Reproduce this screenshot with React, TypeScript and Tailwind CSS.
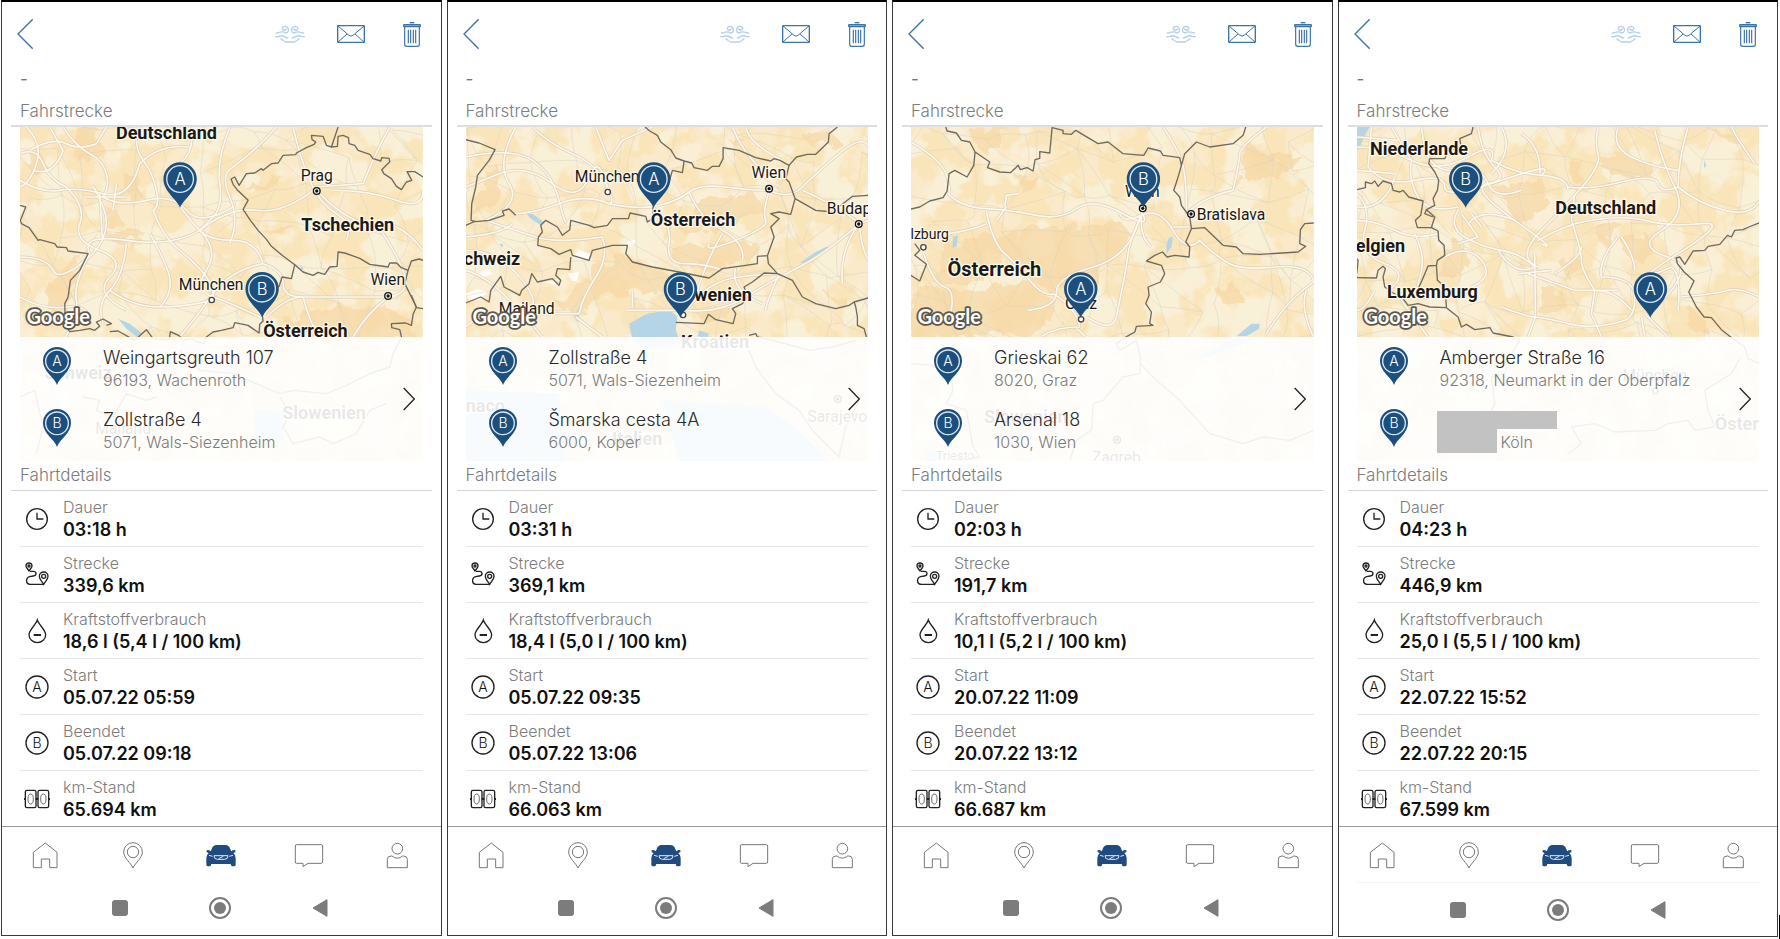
import React from 'react';

type Pt = { x: number; y: number };
type Label = Pt & { text: string; bold?: boolean; size?: number };
type MapData = {
  id: string;
  seed: number;
  x: number;
  borders: string[];
  roads: string[];
  water: string[];
  snow?: string[];
  patches: string[];
  labels: Label[];
  capitals: Pt[];
  cities: Pt[];
  a: Pt;
  b: Pt;
};
type Trip = {
  map: MapData;
  from: [string, string];
  to: [string, string] | null;
  toCity?: string;
  values: string[];
};

const map1: MapData = {
  id: 'm1',
  seed: 4,
  x: 60,
  borders: [
    'M1015 50 995 110 980 105 970 78 935 75 937 88 948 95 943 102 920 112 890 128 888 133 850 135 835 158 815 160 790 180 785 175 765 188 740 190 718 225 705 200 694 206 700 222 712 238 745 270 730 297 752 330 775 360 800 387 815 408 850 437 885 463 910 485 940 495 955 486 975 492 990 470 1012 468 1015 425 1035 428 1080 444 1110 462 1145 467 1165 470 1170 458 1190 458 1205 472 1225 480 1235 452 1258 446 1270 450',
    'M995 110 1013 108 1015 78 1030 75 1046 82 1048 100 1065 105 1075 120 1110 132 1120 145 1143 152 1146 142 1168 144 1170 154 1146 178 1152 190 1175 205 1190 228 1205 238 1220 215 1236 210 1222 184 1245 184 1270 200',
    'M885 463 875 505 847 500 838 528 812 540 800 575 788 618 790 632 780 642 778 668 745 645 705 637 700 652 665 660 640 665 620 680 612 700 570 685 550 690 538 676 512 664 508 690 460 685 440 658 425 672 405 690 355 662 330 664',
    'M60 285 78 290 62 330 65 340 88 352 115 390 120 388 165 400 172 410 200 412 205 422 265 430 240 480 212 510 205 560 195 580 197 645 210 664 240 660 270 655 285 660 300 648 290 635 310 626 335 640 320 645',
    'M1225 480 1215 520 1230 550 1250 590 1240 612 1235 645 1218 638 1175 640 1176 652 1200 658 1205 680 1180 730 1170 770 1110 790 1030 830 980 850 880 840 840 850 700 790 600 780 540 720',
    'M1235 555 1250 592 1270 595', 'M840 860 870 910 850 950 880 1000 960 980 1000 1000 1070 970 1110 900 1160 880', 'M60 860 105 840 130 950 110 1030', 'M250 860 300 870 290 900 340 920 380 850 440 870 470 860',
  ],
  roads: [
    'M60 130Q110 110 130 160T200 230Q260 290 240 340T300 420 330 500 380 600', 'M190 50Q230 110 270 130T320 190 310 260Q360 290 440 270T560 300 700 290', 'M320 50 290 100Q240 120 200 100T90 120', 'M60 210Q130 250 180 240T310 250 420 160Q480 100 570 110', 'M415 50Q400 110 430 150T470 240 460 300Q490 380 540 420T620 500 636 570', 'M570 50Q590 120 540 160T520 260Q570 330 600 360T700 390 790 460', 'M690 50Q650 150 660 220T640 320 600 360Q520 410 380 390T270 430', 'M690 400Q720 330 690 260T700 170Q780 110 830 50', 'M600 360Q660 420 620 480T640 560 790 625', 'M790 460Q690 480 640 550T540 680', 'M60 440Q140 440 160 480T280 430Q340 360 310 290T280 230', 'M270 430Q220 520 230 570T190 690', 'M380 400Q370 500 330 540T310 640', 'M330 540Q400 590 480 590T636 570', 'M480 590Q530 540 500 470T450 370', 'M880 50Q900 140 930 210T1010 310 1040 390', 'M950 230 1090 220Q1130 120 1170 50', 'M940 240Q850 310 770 300T600 360', 'M1000 240Q1110 240 1190 270T1270 240', 'M960 250Q1060 350 1130 340T1270 420', 'M1130 340Q1180 410 1210 480T1165 560', 'M800 620Q860 560 910 560T1100 560 1165 560', 'M910 560Q930 640 960 680', 'M1165 560Q1100 610 1060 680', 'M790 460Q850 480 850 520T910 560', 'M60 560Q130 600 200 590T270 640', 'M80 50Q130 100 110 160T60 230', 'M150 50 190 120Q160 200 100 180', 'M300 250 308 390 M350 220 340 300 M260 260 380 260',
  ],
  water: ['M355 625 390 640 428 670 412 680 380 655Z', 'M900 463 912 475 905 480Z', 'M760 900H850V990H770Z'],
  patches: ['M230 50 300 60 310 140 230 150Z', 'M370 210 410 190 430 260 390 280Z', 'M940 600 1150 580 1250 640 1250 690 950 690 850 640Z', 'M70 150 120 120 150 180 100 190Z', 'M130 540 200 480 240 420 220 560 150 600Z', 'M560 60 640 50 620 90Z', 'M310 280 350 300 380 350 320 350Z', 'M300 370 430 360 390 420Z', 'M730 230 850 190 820 230 750 240Z', 'M800 370 880 340 860 380Z'],
  labels: [{ x: 500, y: 86, text: 'Deutschland', bold: true }, { x: 951, y: 212, text: 'Prag' }, { x: 1044, y: 362, text: 'Tschechien', bold: true }, { x: 634, y: 540, text: 'München' }, { x: 1164, y: 525, text: 'Wien' }, { x: 917, y: 680, text: 'Österreich', bold: true }, { x: 235, y: 806, text: 'Schweiz', bold: true }, { x: 973, y: 926, text: 'Slowenien', bold: true }, { x: 370, y: 970, text: 'Mailand' }],
  capitals: [{ x: 951, y: 242 }, { x: 1165, y: 557 }],
  cities: [{ x: 636, y: 569 }],
  a: { x: 541, y: 206 },
  b: { x: 787, y: 535 },
};

const map2: MapData = {
  id: 'm2',
  seed: 9,
  x: 60,
  borders: [
    'M598 50 612 62 635 75 645 95 675 118 690 143 715 152 738 158 745 172 785 180 800 168 820 168 832 145 832 112 880 120 930 142 975 152 985 145 1003 150 1020 160 1030 165 1052 140 1085 132 1110 132 1148 95 1150 70 1175 50',
    'M60 88 100 98 148 118 130 150 95 195 90 230 78 280 76 330 90 334 130 330 175 315 170 302 190 296 210 315 M60 345 90 332',
    'M715 152 710 187 680 180 670 215 635 240 622 290 620 325 605 335 600 318 553 308 548 325 500 325 485 345 445 352 430 345 375 330 372 358 350 375 335 350 300 330 285 345 290 365 278 380 276 405 315 415 340 432 375 418 380 435 430 450 440 420 500 405 545 405 540 430 560 455 620 470 700 485 790 503 830 475 900 465 935 460 935 438 965 436 985 380 975 350 1000 325 975 310 1000 305 1035 312 1048 265 1030 215 1020 205 1030 165',
    'M60 578 105 560 130 575 135 540 165 498 175 530 222 555 228 540 250 520 258 490 275 515 320 505 340 525 345 510 330 495 335 475 372 478 375 440',
    'M1048 265 1110 300 1160 305 1220 258 1270 255', 'M965 436 968 460 995 490 1040 510 1070 560 1110 580 1170 595 1210 585 1225 575 1270 562', 'M995 490 955 488 920 515 895 530 905 560 890 580 860 595 870 610 862 640 810 628 788 612 775 640 690 636',
    'M1225 575 1230 590 1235 620 1235 645 1255 655 1262 680', 'M910 675 930 670 935 680 1000 695 1090 720 1160 710 1230 690', 'M910 720 930 770 990 850 1060 900 1100 960 1180 1040 1200 950 1250 850',
  ],
  roads: [
    'M60 140Q200 110 260 150T340 270 360 330', 'M210 50Q150 160 190 220T120 330', 'M260 50Q310 100 380 130T480 220 490 280', 'M450 50 490 150 530 90 620 50', 'M490 280Q580 300 640 285T730 245 840 230 960 240', 'M490 280Q420 250 340 280T200 310', 'M620 290Q680 340 670 400T720 460 830 480', 'M730 245Q760 320 830 360T890 450', 'M970 240Q950 310 960 330T870 390 790 400', 'M970 240Q1030 270 1070 230T1180 130 1270 110', 'M1070 240Q1160 280 1230 330', 'M1240 340Q1140 430 1060 470T900 560 720 600', 'M1240 340 1270 330 M1240 340Q1250 430 1270 450 M1240 340Q1180 420 1190 520', 'M470 380Q490 440 450 500T400 610Q300 610 200 610T60 650', 'M540 600 720 600 M390 620 470 680 M240 620 290 680', 'M200 340Q170 370 60 380 M60 420Q160 420 230 510T220 600', 'M120 330Q210 360 270 380T470 380', 'M730 590Q790 510 880 500T990 490', 'M860 50Q890 130 970 200 M900 50Q910 100 1010 150', 'M830 370Q780 450 750 560', 'M870 470Q850 540 950 580', 'M560 540 560 590 M1000 490Q960 580 960 600', 'M60 230 160 190Q240 160 320 220T430 200 490 250', 'M60 480Q130 500 200 580',
  ],
  water: ['M240 308 262 312 295 335 285 345 255 325Z', 'M1062 458 1110 425 1145 408 1148 418 1095 455Z', 'M550 640 600 612 670 598 695 618 690 660 705 700 600 720 560 690Z', 'M760 660 790 670 780 690 755 685Z', 'M385 620 402 585 408 590 395 635Z', 'M60 840 340 850 360 1052 60 1052Z', 'M650 870 960 890 1060 960 1150 1052 700 1052Z', 'M160 400 172 402 170 412Z'],
  snow: ['M385 435 400 420 435 430 428 445 398 447Z', 'M365 490 400 485 395 510 380 513Z', 'M60 550 95 535 125 545 100 570 70 570Z', 'M95 490 130 475 140 490 110 500Z', 'M540 395 568 388 565 403 550 407Z', 'M295 515 330 510 330 525Z'],
  patches: ['M680 330 770 270 930 250 965 310 860 340 720 380Z', 'M110 170 150 160 180 260 120 290 80 320Z', 'M450 470 540 440 680 490 660 550 500 550 400 600 340 600Z', 'M700 410 930 390 930 440 800 480 690 460Z', 'M1060 70 1150 60 1190 100 1100 110Z', 'M740 600 850 590 850 630 770 630Z', 'M840 80 900 90 870 110Z', 'M1140 550 1200 560 1180 590Z'],
  labels: [{ x: 484, y: 216, text: 'München' }, { x: 969, y: 203, text: 'Wien' }, { x: 742, y: 346, text: 'Österreich', bold: true }, { x: 1143, y: 310, text: 'Budapest' }, { x: 122, y: 465, text: 'Schweiz', bold: true }, { x: 243, y: 610, text: 'Mailand' }, { x: 793, y: 573, text: 'Slowenien', bold: true }, { x: 808, y: 712, text: 'Kroatien', bold: true }, { x: 80, y: 904, text: 'Monaco', bold: true }, { x: 574, y: 1004, text: 'Italien', bold: true }, { x: 1175, y: 936, text: 'Sarajevo' }],
  capitals: [{ x: 970, y: 235 }, { x: 1239, y: 341 }, { x: 1176, y: 866 }],
  cities: [{ x: 486, y: 245 }, { x: 712, y: 614 }],
  a: { x: 624, y: 206 },
  b: { x: 704, y: 536 },
};

const map3: MapData = {
  id: 'm3',
  seed: 15,
  x: 63,
  borders: [
    'M168 50 172 62 200 68 215 90 240 95 256 125 300 155 293 172 330 185 362 187 378 172 385 165 392 178 412 172 430 182 436 148 450 144 450 124 480 128 487 52 520 60 520 70 545 72 558 60 625 100 655 95 700 130 762 135 775 113 812 122 820 135 870 142 875 165 885 130 920 95 960 110 1030 100 1060 75 1068 50',
    'M256 125 252 165 232 200 195 180 178 190 172 242 160 262 120 272 90 290 63 296', 'M875 165 862 210 852 240 870 260 875 285 900 320 905 355 888 395 900 410 898 440 855 435 832 440 818 425 795 435 770 452 815 465 825 490 812 515 775 530 778 555 768 580 785 605 780 640 790 645 740 648 735 665 712 678', 'M905 355 945 352 1000 405 1040 410 1060 430 1110 432 1225 425 1248 408 1230 400 1232 358 1245 340 1272 338', 'M75 400 90 420 75 435 110 462 90 512 63 495', 'M712 678 680 700 690 720 740 690 752 740 750 790 700 800 640 870 610 880 605 960 560 990 540 1050', 'M63 760 180 770 190 840 170 880 230 900 250 1010 270 1040 200 1052', 'M752 760 800 810 870 870 960 970 1060 1000 1120 980 1200 990 1272 960',
  ],
  roads: [
    'M63 95Q160 150 172 200T175 250Q210 290 290 295T440 315 560 295 700 310 755 305', 'M290 305Q310 400 345 430T420 510 490 550', 'M290 340Q230 370 63 380', 'M345 290 350 255 385 250 M320 330 350 290', 'M690 310Q700 340 755 315T850 360 930 390Q980 440 1020 460T1160 470 1272 515', 'M755 315Q720 390 715 430T700 520 680 620 590 620', 'M750 320Q720 440 610 470T500 545 415 600', 'M755 320Q750 380 785 410', 'M490 550Q560 590 570 650Q500 650 455 678', 'M820 50Q860 110 875 150T890 300', 'M890 310Q940 260 1030 240Q1050 150 1050 130T1130 50', 'M1272 515Q1190 570 1130 670', 'M1250 540Q1230 590 1270 678', 'M100 425Q130 520 165 530T180 620', 'M560 655 590 680 M850 350 900 350',
  ],
  water: ['M830 400 838 382 850 380 845 410 830 430Z', 'M1040 678 1085 640 1110 640 1108 655 1070 678Z', 'M190 380 205 375 200 410 188 412Z', 'M920 740 1040 680 1090 690 960 740Z', 'M110 1020H180V1052H110Z'],
  patches: ['M260 370 540 345 690 330 730 380 680 450 620 490 590 560 440 530 340 430 270 500 130 520 170 420Z', 'M63 540 220 530 420 520 500 570 440 680 63 678Z', 'M230 50 360 55 300 140 260 110Z', 'M1070 90 1150 150 1230 130 1220 180 1080 220 1060 160Z', 'M380 200 440 190 450 240 400 250Z', 'M1050 190 1070 210 1040 240Z', 'M980 540 1040 520 1060 570 1010 590Z', 'M720 180 760 160 740 220Z'],
  labels: [{ x: 96, y: 387, text: 'Salzburg', size: 42 }, { x: 314, y: 498, text: 'Österreich', bold: true, size: 60 }, { x: 758, y: 260, text: 'Wien' }, { x: 1024, y: 330, text: 'Bratislava' }, { x: 574, y: 596, text: 'Graz' }, { x: 408, y: 938, text: 'Slowenien', bold: true }, { x: 186, y: 1050, text: 'Triest', size: 38 }, { x: 680, y: 1058, text: 'Zagreb' }],
  capitals: [{ x: 759, y: 294 }, { x: 904, y: 311 }, { x: 682, y: 988 }],
  cities: [{ x: 101, y: 411 }, { x: 574, y: 627 }, { x: 242, y: 1038 }],
  a: { x: 573, y: 536 },
  b: { x: 761, y: 206 },
};

const map4: MapData = {
  id: 'm4',
  seed: 22,
  x: 66,
  borders: [
    'M415 50 410 70 375 85 378 105 340 125 330 145 285 145 282 160 300 185 312 210 308 240 295 265 300 285 275 298 300 320 290 352 310 362 312 390 328 405 330 435 308 450 305 465 280 467 262 510 250 535', 'M66 238 92 232 92 215 110 220 120 212 130 228 145 212 170 220 175 240 195 245 205 240 222 260 265 272 258 315 242 330 248 352 290 352', 'M275 298 270 310 295 320', 'M66 445 70 450 66 490 M66 502 125 503 130 480 145 468 152 475 145 500 150 530 175 548 205 565 220 585 250 580 285 590 335 592 370 620 380 650 395 642 420 658 465 652 475 668 535 680', 'M305 465 308 510 330 530 333 560 335 592', 'M1275 337 1242 350 1225 358 1200 360 1190 380 1178 375 1155 402 1120 408 1110 420 1075 422 1050 462 1035 440 1024 443 1028 460 1048 485 1078 512 1062 545 1085 590 1108 620 1130 622 1160 658 1185 678 1230 710 1240 745 1275 760', 'M535 680 555 690 525 740 510 790 470 800 480 880 440 960', 'M1215 745 1190 790 1110 840 1120 900 1140 950 1080 960 1060 930 1000 940 960 960 840 965 780 940 710 950 740 1000 700 1030',
  ],
  roads: [
    'M66 110Q150 110 230 150T400 140 470 150Q540 190 620 195T700 240', 'M110 50 100 170Q150 230 240 210T330 230 500 210 620 195', 'M170 50 230 150Q220 210 250 260T370 290', 'M260 50 270 120Q300 190 370 180T460 220 560 240', 'M430 50Q440 130 480 170T460 220 540 330 620 400', 'M500 50Q540 120 470 190', 'M560 70Q620 110 615 190', 'M790 50Q780 100 790 130T750 220 620 360 610 470', 'M700 230Q760 240 860 215T970 220 1030 230', 'M960 60Q980 150 1020 230T980 360 1000 440 940 610', 'M1060 50Q1030 150 1030 230Q1090 280 1170 300T1275 270', 'M850 50Q830 110 890 140T1030 180', 'M1190 50Q1210 90 1260 160', 'M720 340Q850 310 930 330T1100 340 1030 430 1010 470', 'M720 250 710 330Q740 420 740 450T780 540Q840 540 890 600', 'M610 390Q660 360 720 340', 'M66 330Q120 330 180 360T310 370', 'M66 250Q110 290 90 360T150 460 160 540', 'M240 370Q270 430 260 480T240 550', 'M370 300Q340 350 390 380T500 420 600 470', 'M400 340Q440 290 540 330', 'M380 310 430 380 370 400 M410 310 440 350', 'M600 470Q540 500 490 420', 'M330 440Q400 400 440 450T410 530', 'M600 430 602 620 580 680', 'M580 490 720 540 850 540 M550 490 650 480', 'M660 490Q740 440 740 410', 'M800 500Q900 500 900 560T870 630Q780 660 700 640T600 620 500 590', 'M1010 470Q1040 490 1030 600', 'M1040 560Q1150 550 1180 540T1275 560', 'M780 540 770 610 800 680 M930 610 1000 680 M920 620 930 680', 'M850 380Q790 450 800 500', 'M860 380Q900 440 900 480 920 490', 'M120 540Q90 600 66 600 M200 570 280 680', 'M66 180 180 190 M66 80 190 90 M180 200Q150 300 66 290',
  ],
  water: ['M66 50H105L90 75 75 110 66 120Z', 'M1108 150 1114 165 1108 175Z'],
  patches: ['M490 240 560 230 620 200 635 240 600 320 550 340Z', 'M790 140 860 130 960 160 965 200 880 205 800 170Z', 'M860 390 940 370 960 420 920 455 870 430Z', 'M620 550 680 530 690 590 640 620 610 610Z', 'M320 420 370 390 410 460 360 510 310 490Z', 'M700 150 740 150 740 220 710 210Z', 'M780 340 850 330 850 370 800 400Z', 'M1070 590 1120 640 1130 678 1050 640Z', 'M680 460 740 440 750 490 700 510Z', 'M1120 60 1200 80 1230 110 1200 100Z'],
  labels: [{ x: 253, y: 133, text: 'Niederlande', bold: true }, { x: 813, y: 310, text: 'Deutschland', bold: true }, { x: 120, y: 424, text: 'Belgien', bold: true }, { x: 293, y: 562, text: 'Luxemburg', bold: true }, { x: 960, y: 812, text: 'München' }, { x: 1267, y: 960, text: 'Österreich', bold: true }],
  capitals: [],
  cities: [{ x: 962, y: 842 }],
  a: { x: 947, y: 536 },
  b: { x: 393, y: 206 },
};

const trips: Trip[] = [
  { map: map1, from: ['Weingartsgreuth 107', '96193, Wachenroth'], to: ['Zollstraße 4', '5071, Wals-Siezenheim'], values: ['03:18 h', '339,6 km', '18,6 l (5,4 l / 100 km)', '05.07.22 05:59', '05.07.22 09:18', '65.694 km'] },
  { map: map2, from: ['Zollstraße 4', '5071, Wals-Siezenheim'], to: ['Šmarska cesta 4A', '6000, Koper'], values: ['03:31 h', '369,1 km', '18,4 l (5,0 l / 100 km)', '05.07.22 09:35', '05.07.22 13:06', '66.063 km'] },
  { map: map3, from: ['Grieskai 62', '8020, Graz'], to: ['Arsenal 18', '1030, Wien'], values: ['02:03 h', '191,7 km', '10,1 l (5,2 l / 100 km)', '20.07.22 11:09', '20.07.22 13:12', '66.687 km'] },
  { map: map4, from: ['Amberger Straße 16', '92318, Neumarkt in der Oberpfalz'], to: null, toCity: 'Köln', values: ['04:23 h', '446,9 km', '25,0 l (5,5 l / 100 km)', '22.07.22 15:52', '22.07.22 20:15', '67.599 km'] },
];

// Irregular web of minor roads: jittered grid nodes joined to their neighbours.
function minorRoads(seed: number, x0: number) {
  let s = seed * 7919 + 13;
  const rnd = () => {
    s = (s * 16807) % 2147483647;
    return s / 2147483647;
  };
  const step = 105;
  const cols = 13;
  const rows = 11;
  const pts: Pt[] = [];
  for (let r = 0; r < rows; r++)
    for (let c = 0; c < cols; c++)
      pts.push({ x: Math.round(x0 + c * step + (rnd() - 0.5) * 90), y: Math.round(50 + r * step + (rnd() - 0.5) * 90) });
  let d = '';
  const join = (a: Pt, b: Pt) => {
    const mx = Math.round((a.x + b.x) / 2 + (rnd() - 0.5) * 40);
    const my = Math.round((a.y + b.y) / 2 + (rnd() - 0.5) * 40);
    d += `M${a.x} ${a.y}Q${mx} ${my} ${b.x} ${b.y}`;
  };
  for (let r = 0; r < rows; r++)
    for (let c = 0; c < cols; c++) {
      const i = r * cols + c;
      if (c < cols - 1 && rnd() < 0.8) join(pts[i], pts[i + 1]);
      if (r < rows - 1 && rnd() < 0.8) join(pts[i], pts[i + cols]);
      if (c < cols - 1 && r < rows - 1 && rnd() < 0.35) join(pts[i], pts[i + cols + 1]);
    }
  return d;
}

function MapPin({ x, y, letter }: Pt & { letter: string }) {
  return (
    <g transform={`translate(${x} ${y})`}>
      <path d="M0 86C-10 60-50 38-50 0A50 50 0 0 1 50 0C50 38 10 60 0 86Z" fill="#1d4f7c" />
      <circle r="40" fill="none" stroke="#d9e8f5" strokeWidth="4" />
      <text y="18" textAnchor="middle" fontFamily="Inter, sans-serif" fontWeight="300" fontSize="50" fill="#fff">{letter}</text>
    </g>
  );
}

function RouteMap({ m }: { m: MapData }) {
  const land = m.id + '-land';
  const fine = m.id + '-fine';
  const rough = m.id + '-rough';
  return (
    <svg className="absolute inset-0 h-full w-full" viewBox={`${m.x} 50 1209 1002`} preserveAspectRatio="xMidYMid slice" role="img" aria-label="Karte">
      <defs>
        <filter id={land} x="0" y="0" width="1" height="1">
          <feTurbulence type="fractalNoise" baseFrequency="0.011" numOctaves="4" seed={m.seed} />
          <feColorMatrix values="0 0 0 0 0.97  0 0 0 0 0.85  0 0 0 0 0.66  9 0 0 0 -4.8" />
        </filter>
        <filter id={fine} x="0" y="0" width="1" height="1">
          <feTurbulence type="fractalNoise" baseFrequency="0.009" numOctaves="4" seed={m.seed + 50} />
          <feColorMatrix values="0 0 0 0 0.955  0 0 0 0 0.91  0 0 0 0 0.79  0 9 0 0 -4.3" />
        </filter>
        <filter id={rough}>
          <feTurbulence type="fractalNoise" baseFrequency="0.02" numOctaves="3" seed={m.seed} />
          <feDisplacementMap in="SourceGraphic" scale="60" />
        </filter>
      </defs>
      <rect x={m.x} y="50" width="1209" height="1002" fill="#f9e5b9" />
      <rect x={m.x} y="50" width="1209" height="1002" filter={`url(#${fine})`} opacity="0.7" />
      <rect x={m.x} y="50" width="1209" height="1002" filter={`url(#${land})`} opacity="0.65" />
      <g fill="#f7d8a6" opacity="0.7" filter={`url(#${rough})`}>
        {m.patches.map((d) => <path key={d} d={d} />)}
      </g>
      <g fill="#b4d5e8">{m.water.map((d) => <path key={d} d={d} />)}</g>
      {m.snow && <g fill="#fffefb">{m.snow.map((d) => <path key={d} d={d} />)}</g>}
      <path d={minorRoads(m.seed, m.x)} fill="none" stroke="#dcd3bd" strokeWidth="3" opacity="0.5" />
      <g fill="none" strokeLinejoin="round">
        <g stroke="#dccfb8" strokeWidth="9">{m.roads.map((d) => <path key={d} d={d} />)}</g>
        <g stroke="#fdf7ec" strokeWidth="5">{m.roads.map((d) => <path key={d} d={d} />)}</g>
        <g stroke="#6f6a5e" strokeWidth="4">{m.borders.map((d) => <path key={d} d={d} />)}</g>
      </g>
      {m.cities.map((p) => <circle key={p.x} cx={p.x} cy={p.y} r="8" fill="#fff" stroke="#444" strokeWidth="4" />)}
      {m.capitals.map((p) => (
        <g key={p.x}>
          <circle cx={p.x} cy={p.y} r="10" fill="#fff" stroke="#111" strokeWidth="4" />
          <circle cx={p.x} cy={p.y} r="5" fill="#111" />
        </g>
      ))}
      <g fontFamily="Roboto, sans-serif" fill="#1a1a1a" stroke="#fff8e8" strokeWidth="8" strokeLinejoin="round" style={{ paintOrder: 'stroke' }}>
        {m.labels.map((l) => (
          <text key={l.text} x={l.x} y={l.y} fontSize={l.size ?? (l.bold ? 54 : 47)} fontWeight={l.bold ? 700 : 400} textAnchor={l.text === 'Budapest' ? 'start' : 'middle'}>{l.text}</text>
        ))}
      </g>
      <text x={m.x + 20} y="642" fontFamily="Lato, sans-serif" fontWeight="700" fontSize="60" fill="#fff" stroke="#5c574d" strokeWidth="11" strokeLinejoin="round" style={{ paintOrder: 'stroke' }}>Google</text>
      <MapPin {...m.a} letter="A" />
      <MapPin {...m.b} letter="B" />
    </svg>
  );
}

function StopPin({ letter }: { letter: string }) {
  return (
    <svg className="h-[38px] w-7 shrink-0" viewBox="0 0 84 114" aria-hidden="true">
      <path d="M42 114C34 90 0 74 0 42A42 42 0 0 1 84 42C84 74 50 90 42 114Z" fill="#1d4f7c" />
      <circle cx="42" cy="43" r="34" fill="none" stroke="#d9e8f5" strokeWidth="4" />
      <text x="42" y="58" textAnchor="middle" fontFamily="Inter, sans-serif" fontWeight="300" fontSize="42" fill="#fff">{letter}</text>
    </svg>
  );
}

function Stop({ letter, children }: { letter: string; children: React.ReactNode }) {
  return (
    <span className="flex h-[62px] items-start pl-[23px] pt-[10px]">
      <StopPin letter={letter} />
      <span className="block pl-8">{children}</span>
    </span>
  );
}

const Address = ({ lines }: { lines: [string, string] }) => (
  <>
    <span className="block text-[18px] leading-[22px] text-[#2a2a2a]">{lines[0]}</span>
    <span className="block text-[16px] leading-[22px] text-[#7c7c7c]">{lines[1]}</span>
  </>
);

const Letter = ({ l }: { l: string }) => (
  <>
    <circle cx="39" cy="39" r="33" />
    <text x="39" y="54" textAnchor="middle" fontFamily="Inter, sans-serif" fontWeight="300" fontSize="42" fill="#111" stroke="none">{l}</text>
  </>
);

const detailIcons: React.ReactNode[] = [
  <><circle cx="39" cy="39" r="31" /><path d="M39 20V39H58" /></>,
  <>
    <path d="M15 27C11 20 6 17 6 12A9 9 0 0 1 24 12C24 17 19 20 15 27Z" /><circle cx="15" cy="12" r="3" />
    <path d="M59 67C53 56 46 52 46 43A13 13 0 0 1 72 43C72 52 65 56 59 67Z" /><circle cx="59" cy="43" r="6" />
    <path d="M18 28H28C38 28 39 40 28 42L17 44C4 48 5 66 18 67H59" />
  </>,
  <><path d="M40 6C36 20 15 36 15 50A25 24 0 0 0 65 50C65 36 44 20 40 6Z" /><path d="M29 51H51" strokeWidth="6" /></>,
  <Letter l="A" />,
  <Letter l="B" />,
  <>
    <rect x="4" y="13" width="32" height="52" rx="5" /><rect x="42" y="13" width="32" height="52" rx="5" />
    <path d="M0 39H5M35 39H43M73 39H78" strokeWidth="6" />
    <ellipse cx="20" cy="39" rx="8" ry="15" strokeWidth="2" /><ellipse cx="58" cy="39" rx="8" ry="15" strokeWidth="2" />
  </>,
];
const detailLabels = ['Dauer', 'Strecke', 'Kraftstoffverbrauch', 'Start', 'Beendet', 'km-Stand'];

const navItems: { label: string; icon: React.ReactNode }[] = [
  { label: 'Start', icon: <path d="M10 37 46 9 81 37V83H59V57H34V83H10Z" /> },
  { label: 'Karte', icon: <><path d="M45 84C38 68 17 54 17 36A28 28 0 0 1 73 36C73 54 52 68 45 84Z" /><circle cx="45" cy="36" r="17" /></> },
  {
    label: 'Fahrzeug',
    icon: (
      <g stroke="none">
        <path fill="#204b80" d="M16 30Q20 15 32 15H58Q70 15 74 30L76 34 80 31Q88 29 89 33 89 38 82 39 89 45 89 54V74Q89 79 84 79H79Q75 79 74 72H16Q15 79 11 79H6Q1 79 1 74V54Q1 45 8 39 1 38 1 33 2 29 10 31L14 34Z" />
        <path fill="none" stroke="#dfe8f2" strokeWidth="3" d="M9 46 20 49M81 46 70 49M24 47H66Q66 58 56 58H34Q24 58 24 47ZM38 56 52 49" />
      </g>
    ),
  },
  { label: 'Nachrichten', icon: <path d="M8 14H82Q86 14 86 18V66Q86 70 82 70H42L27 80V70H8Q4 70 4 66V18Q4 14 8 14Z" /> },
  { label: 'Profil', icon: <><circle cx="46" cy="26" r="16" /><path d="M16 83V58Q16 48 27 48H30Q46 61 62 48H65Q76 48 76 58V83Z" /></> },
];

function Phone({ trip, last }: { trip: Trip; last: boolean }) {
  return (
    <section className="flex min-w-0 flex-col border border-t-2 border-[#3a3a3a] border-t-black bg-white">
      <header className="flex h-16 items-center pl-[15px] pr-5">
        <button type="button" aria-label="Zurück" className="mr-auto">
          <svg className="h-8 w-4" viewBox="0 0 48 96" fill="none" stroke="#3b73ab" strokeWidth="4"><path d="M47 4 3 48 47 92" /></svg>
        </button>
        <button type="button" aria-label="Teilen">
          <svg className="h-[18px] w-[30px]" viewBox="0 0 90 54" fill="none" stroke="#b5d0ea" strokeWidth="4" strokeLinecap="round">
            <path d="M4 24C14 24 20 16 32 24M32 24C42 22 42 14 38 8C32 1 20 5 22 12C24 17 30 17 34 12" />
            <path d="M86 24C76 24 70 16 58 24M58 24C48 22 48 14 52 8C58 1 70 5 68 12C66 17 60 17 56 12" />
            <path d="M2 35H12C20 27 26 36 38 39M88 35H78C70 27 64 36 52 39M18 42C24 44 26 51 34 51H56C64 51 66 44 72 42" />
          </svg>
        </button>
        <button type="button" aria-label="Nachricht" className="ml-8">
          <svg className="h-[18px] w-7" viewBox="0 0 84 54" fill="none" stroke="#3b73ab" strokeWidth="4">
            <rect x="2" y="2" width="80" height="50" rx="2" /><path d="M3 3 36 31Q42 36 48 31L81 3M3 51 30 27M81 51 54 27" strokeWidth="3" />
          </svg>
        </button>
        <button type="button" aria-label="Löschen" className="ml-[38px]">
          <svg className="h-[25px] w-[18px]" viewBox="0 0 54 75" fill="none" stroke="#3b73ab" strokeWidth="4">
            <path d="M20 2H34" /><rect x="2" y="8" width="50" height="6" rx="2" fill="#8db4dc" />
            <path d="M5 15V67Q5 73 11 73H43Q49 73 49 67V15M16 23V64M23 23V64M31 23V64M38 23V64" strokeWidth="3.5" />
          </svg>
        </button>
      </header>
      <p className="h-6 pl-[18px] text-[17px] font-normal leading-[26px] text-[#777]">-</p>
      <h2 className="mx-[9px] h-[37px] border-b-2 border-[#dedede] pl-[9px] pt-1 text-[17px] leading-[34px] text-[#7c7c7c]">Fahrstrecke</h2>
      <div className="relative mx-[18px] h-[334px] overflow-hidden">
        <RouteMap m={trip.map} />
        <button type="button" className="absolute inset-x-0 bottom-0 flex h-[124px] items-center bg-white/90 text-left">
          <span className="min-w-0 flex-1">
            <Stop letter="A"><Address lines={trip.from} /></Stop>
            <Stop letter="B">
              {trip.to ? (
                <Address lines={trip.to} />
              ) : (
                <span className="-ml-[3px] block pt-[2px]">
                  <span className="block h-[18px] w-[120px] bg-[#c2c2c2]" />
                  <span className="flex">
                    <span className="h-6 w-[60px] bg-[#c2c2c2]" />
                    <span className="pl-1 text-[16px] leading-[26px] text-[#7c7c7c]">{trip.toCity}</span>
                  </span>
                </span>
              )}
            </Stop>
          </span>
          <svg className="mr-2 h-6 w-3 shrink-0" viewBox="0 0 36 72" fill="none" stroke="#222" strokeWidth="4"><path d="M2 3 34 36 2 69" /></svg>
        </button>
      </div>
      <h2 className="mx-[9px] h-[30px] border-b border-[#d4d4d4] pl-[9px] text-[17px] leading-[29px] text-[#7c7c7c]">Fahrtdetails</h2>
      <dl className="px-[18px]">
        {detailLabels.map((label, i) => (
          <div key={label} className={i < 5 ? 'flex h-14 border-b border-[#e6e6e6]' : 'flex h-[55px]'}>
            <svg className="ml-1 mt-[15px] h-[26px] w-[26px] shrink-0" viewBox="0 0 78 78" fill="none" stroke="#222" strokeWidth="4" aria-hidden="true">{detailIcons[i]}</svg>
            <div className="pl-[13px] pt-[6px]">
              <dt className="text-[16px] leading-[21px] text-[#7c7c7c]">{label}</dt>
              <dd className="text-[18px] font-semibold leading-6 text-[#111]">{trip.values[i]}</dd>
            </div>
          </div>
        ))}
      </dl>
      <nav className="flex h-14 items-center justify-between border-t border-[#999] pl-7 pr-[29px]">
        {navItems.map((n) => (
          <a key={n.label} href="#" aria-label={n.label}>
            <svg className="h-[30px] w-[30px]" viewBox="0 0 90 90" fill="none" stroke="#777" strokeWidth="3" strokeLinejoin="round">{n.icon}</svg>
          </a>
        ))}
      </nav>
      <div className={last ? 'mx-[18px] flex h-[54px] items-center justify-center gap-[81px] border-t border-[#f4f4f4]' : 'mx-[18px] flex h-[53px] items-center justify-center gap-[81px] pb-0.5 pr-0.5'}>
        <button type="button" aria-label="Übersicht" className="h-4 w-4 rounded-[3px] bg-[#7c7c7c]" />
        <button type="button" aria-label="Home" className="flex h-[22px] w-[22px] items-center justify-center rounded-full border-2 border-[#7c7c7c]">
          <span className="h-3 w-3 rounded-full bg-[#7c7c7c]" />
        </button>
        <button type="button" aria-label="Zurück zur vorigen Ansicht">
          <svg className="h-[18px] w-4" viewBox="0 0 48 54"><path d="M3 27 45 2V52Z" fill="#7c7c7c" stroke="#7c7c7c" strokeWidth="3" strokeLinejoin="round" /></svg>
        </button>
      </div>
    </section>
  );
}

export default function App() {
  return (
    <main className="relative min-h-screen bg-white font-['Inter',sans-serif] font-light">
      <div className="grid grid-cols-4 items-start gap-[5px] pl-px pr-0.5">
        {trips.map((t, i) => <Phone key={t.map.id} trip={t} last={i === 3} />)}
      </div>
      <span className="absolute bottom-0 right-0 h-6 w-px bg-black" />
    </main>
  );
}
